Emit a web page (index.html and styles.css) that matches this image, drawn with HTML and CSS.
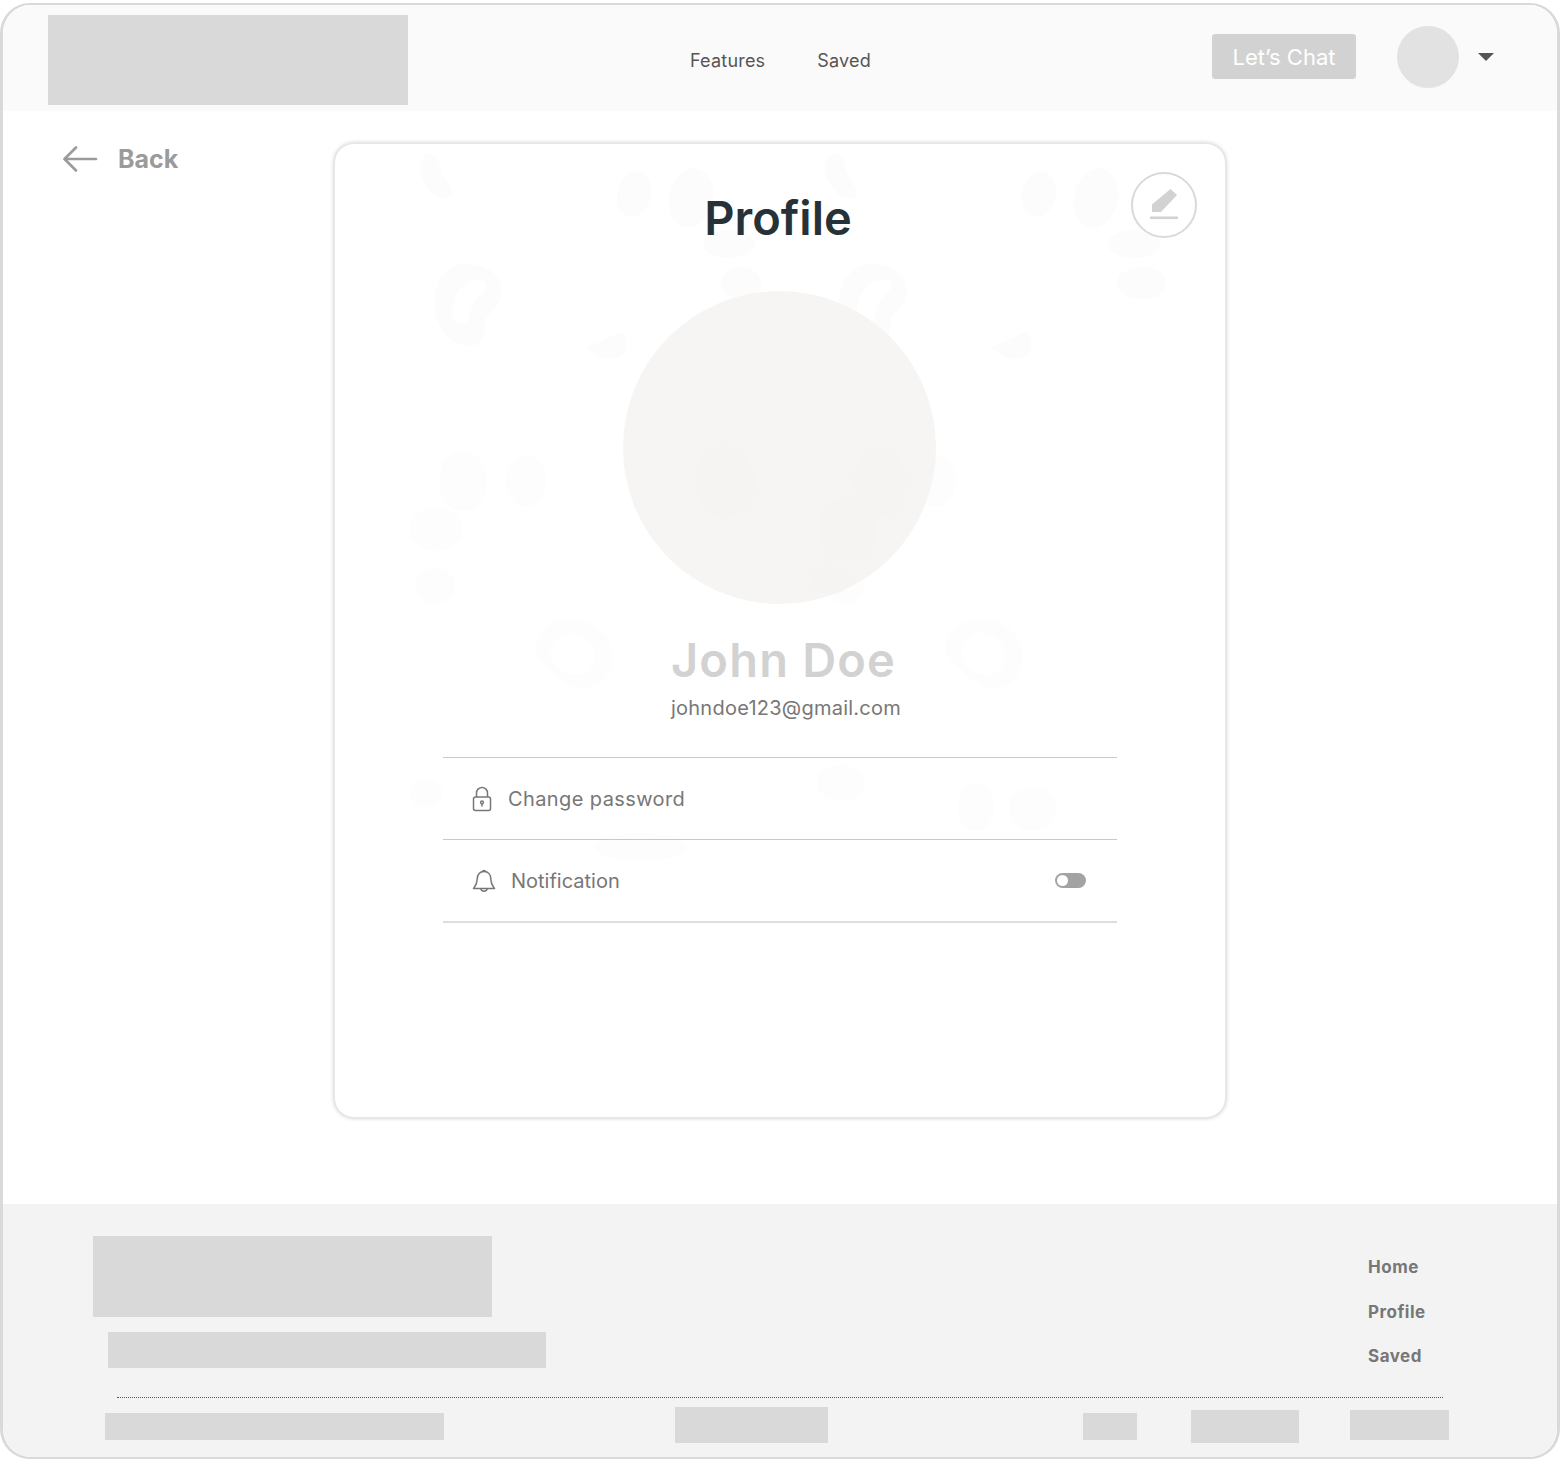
FILE: index.html
```html
<!DOCTYPE html>
<html lang="en">
  <head>
    <meta charset="utf-8" />
    <title>Profile</title>
    <link rel="stylesheet" href="styles.css">
  </head>
  <body>
    <div class="frame">
      <!-- header -->
      <header class="topbar">
        <div class="logo-block"></div>
        <nav class="topnav">
          <a href="#">Features</a>
          <a href="#">Saved</a>
        </nav>
        <button class="chat-btn">Let’s Chat</button>
        <div class="avatar-small"></div>
        <div class="caret"></div>
      </header>

      <main class="content">
        <a href="#" class="back-link">
          <svg width="36" height="28" viewBox="0 0 36 28" fill="none" stroke="#9b9b9b" stroke-width="2.6" stroke-linecap="round" stroke-linejoin="round">
            <path d="M33 14H2" />
            <path d="M13 2.5 1.5 14 13 25.5" />
          </svg>
          <span>Back</span>
        </a>

        <section class="profile-card">
          <!-- faint background pattern -->
          <svg class="card-pattern" width="890" height="973" viewBox="334 143 890 973" fill="#fcfcfc">
            <defs>
              <g id="motif">
                <path d="M420 160c6-12 18-8 19 6 1 10 12 18 12 26 0 8-16 6-22-2-7-8-13-20-9-30z" />
                <ellipse cx="633" cy="193" rx="17" ry="23" transform="rotate(12 633 193)" />
                <ellipse cx="690" cy="197" rx="22" ry="30" transform="rotate(12 690 197)" />
                <ellipse cx="728" cy="243" rx="26" ry="14" />
                <ellipse cx="740" cy="282" rx="20" ry="16" />
                <path fill-rule="evenodd" d="M465 263c22 0 38 12 35 32-2 12-14 16-16 26-1 14-2 24-16 24-20 0-36-24-35-44 1-22 14-38 32-38zm12 16c-14 0-26 14-26 34 0 8 8 12 14 8 3-2 4-10 6-16 2-8 16-14 14-22-1-3-4-4-8-4z" />
                <path d="M585 345c12-2 22-8 33-14 7 1 10 14 5 22-8 6-26 8-38-8z" />
              </g>
              <g id="motif-low" fill="#fdfdfd">
                <ellipse cx="462" cy="480" rx="24" ry="30" />
                <ellipse cx="525" cy="480" rx="20" ry="26" />
                <ellipse cx="435" cy="528" rx="26" ry="22" />
                <ellipse cx="434" cy="585" rx="20" ry="18" />
                <path fill-rule="evenodd" d="M570 618c24 0 42 18 42 38s-16 32-30 32-34-18-48-36c-2-18 14-34 36-34zm0 14c-10 0-20 8-20 20s14 22 26 22 18-10 18-20-12-22-24-22z" />
              </g>
            </defs>
            <use href="#motif" />
            <use href="#motif" x="405" />
            <use href="#motif-low" />
            <use href="#motif-low" x="410" />
            <ellipse cx="1140" cy="282" rx="24" ry="16" />
            <g fill="#fdfdfd">
              <ellipse cx="840" cy="782" rx="24" ry="18" />
              <ellipse cx="975" cy="806" rx="18" ry="24" />
              <ellipse cx="1032" cy="808" rx="24" ry="22" />
              <ellipse cx="425" cy="792" rx="16" ry="14" />
              <ellipse cx="640" cy="846" rx="46" ry="14" />
            </g>
          </svg>

          <h1 class="card-title">Profile</h1>
          <button class="edit-btn">
            <svg width="30" height="32" viewBox="0 0 30 32" fill="#d2d2d2">
              <path d="M21.5 1 28 7 12 24H3v-7.500z" />
              <rect x="1" y="28.500" width="28" height="2.600" />
            </svg>
          </button>

          <div class="avatar-big">
            <svg width="313" height="313" viewBox="623 291 313 313" fill="#f5f4f3">
              <ellipse cx="725" cy="482" rx="30" ry="36" />
              <ellipse cx="880" cy="482" rx="26" ry="36" />
              <ellipse cx="848" cy="530" rx="30" ry="32" />
              <ellipse cx="830" cy="580" rx="20" ry="14" />
            </svg>
          </div>

          <h2 class="user-name">John Doe</h2>
          <p class="user-mail">johndoe123@gmail.com</p>

          <ul class="settings">
            <li class="settings-row">
              <svg class="row-icon" width="20" height="26" viewBox="0 0 20 26" fill="none" stroke="#777" stroke-width="1.500">
                <rect x="1.500" y="11" width="17" height="13.500" rx="2" />
                <path d="M4.500 11V7a5.500 5.500 0 0 1 11 0v4" />
                <circle cx="10" cy="16.500" r="1.400" />
                <path d="M10 18v2.500" />
              </svg>
              <span class="row-text row-text-wide">Change password</span>
            </li>
            <li class="settings-row">
              <svg class="row-icon row-icon-bell" width="24" height="26" viewBox="0 0 24 26" fill="none" stroke="#777" stroke-width="1.500" stroke-linejoin="round">
                <path d="M12 3.500c-4.500 0-6.800 3.400-6.800 7.500 0 5-1.500 6.500-3.700 9.500h21c-2.200-3-3.700-4.500-3.700-9.500 0-4.100-2.300-7.500-6.800-7.500z" />
                <path d="M10.300 3.700a1.800 1.800 0 0 1 3.400 0" />
                <path d="M8.800 20.800a3.300 3.300 0 0 0 6.400 0" />
              </svg>
              <span class="row-text">Notification</span>
              <span class="toggle"><span class="toggle-knob"></span></span>
            </li>
          </ul>
        </section>
      </main>

      <!-- footer -->
      <footer class="site-footer">
        <div class="footer-top">
          <div class="footer-brand">
            <div class="footer-logo"></div>
            <div class="footer-tagline"></div>
          </div>
          <ul class="footer-links">
            <li><a href="#">Home</a></li>
            <li><a href="#">Profile</a></li>
            <li><a href="#">Saved</a></li>
          </ul>
        </div>
        <div class="footer-rule"></div>
        <div class="footer-bottom">
          <div class="ph ph-copy"></div>
          <div class="ph ph-mid"></div>
          <div class="ph ph-small"></div>
          <div class="ph ph-terms"></div>
          <div class="ph ph-last"></div>
        </div>
      </footer>
    </div>
  </body>
</html>
```

FILE: styles.css
```css
* {
  box-sizing: border-box;
}

body {
  margin: 0;
  background-color: white;
  font-family: Inter, "Liberation Sans", sans-serif;
}

a {
  color: inherit;
  text-decoration: none;
}

ul {
  list-style: none;
  margin: 0;
  padding: 0;
}

.frame {
  display: flex;
  flex-direction: column;
  width: 1560px;
  height: 1456px;
  margin-top: 3px;
  border: 3px solid #d9d9d9;
  border-top-width: 2px;
  border-bottom-width: 2px;
  border-radius: 30px;
  overflow: hidden;
  background-color: white;
}

/* header */
.topbar {
  display: flex;
  align-items: flex-start;
  flex: none;
  height: 106px;
  padding: 10px 0 0 45px;
  background-color: #fafafa;
}

.logo-block {
  width: 360px;
  height: 90px;
  background-color: #d9d9d9;
}

.topnav {
  display: flex;
  gap: 52px;
  margin: 36px 0 0 282px;
  font-size: 18px;
  letter-spacing: 0.2px;
  line-height: 20px;
  color: #555;
}

.chat-btn {
  width: 144px;
  height: 45px;
  margin: 19px 0 0 341px;
  border: 0;
  border-radius: 3px;
  background-color: #d2d2d2;
  color: white;
  font-family: Inter, sans-serif;
  font-size: 22px;
}

.avatar-small {
  width: 62px;
  height: 62px;
  margin: 11px 0 0 41px;
  border-radius: 50%;
  background-color: #e2e2e2;
}

.caret {
  width: 0;
  height: 0;
  margin: 38px 0 0 19px;
  border-left: 8px solid transparent;
  border-right: 8px solid transparent;
  border-top: 8px solid #555;
}

/* main */
.content {
  display: flex;
  align-items: flex-start;
  flex: 1;
  padding: 32px 0 0 60px;
}

.back-link {
  display: flex;
  align-items: center;
  gap: 19px;
  width: 271px;
  height: 32px;
  color: #9b9b9b;
  font-size: 25px;
  font-weight: 700;
}

.profile-card {
  position: relative;
  width: 892px;
  height: 975px;
  padding: 44px 108px 0;
  border: 1px solid #e6e6e6;
  border-radius: 20px;
  background-color: white;
  box-shadow: 0 0 4px rgba(0, 0, 0, 0.22);
  text-align: center;
}

.card-pattern {
  position: absolute;
  top: 0;
  left: 0;
}

.card-title,
.avatar-big,
.user-name,
.user-mail,
.settings {
  position: relative;
}

.card-title {
  height: 60px;
  margin: 0;
  padding-right: 4px;
  color: #263238;
  font-size: 47px;
  font-weight: 600;
  line-height: 60px;
}

.edit-btn {
  position: absolute;
  top: 28px;
  right: 28px;
  display: flex;
  align-items: center;
  justify-content: center;
  width: 66px;
  height: 66px;
  padding: 0 0 2px;
  border: 2px solid #d9d9d9;
  border-radius: 50%;
  background-color: white;
}

.avatar-big {
  width: 313px;
  height: 313px;
  margin: 43px 0 0 180px;
  border-radius: 50%;
  background-color: #f6f5f4;
}

.user-name {
  height: 60px;
  margin: 26px 0 0;
  padding-left: 7px;
  color: #d2d2d2;
  font-size: 47px;
  font-weight: 600;
  letter-spacing: 1.2px;
  line-height: 60px;
}

.user-mail {
  height: 30px;
  margin: 3px 0 0;
  padding-left: 12px;
  color: #777;
  font-size: 20px;
  letter-spacing: 0.25px;
  line-height: 30px;
}

.settings {
  margin-top: 34px;
  border-top: 1px solid #c9c9c9;
}

.settings-row {
  display: flex;
  align-items: center;
  height: 82px;
  padding: 0 31px 0 29px;
  border-bottom: 1px solid #c9c9c9;
  color: #777;
  font-size: 20px;
}

.settings-row:last-child {
  height: 83px;
  border-bottom: 2px solid #dedede;
}

.row-icon {
  margin-right: 16px;
}

.row-icon-bell {
  margin-right: 15px;
}

.row-text {
  flex: 1;
  text-align: left;
}

.row-text-wide {
  letter-spacing: 0.4px;
}

.toggle {
  display: flex;
  align-items: center;
  width: 31px;
  height: 15px;
  padding-left: 2px;
  border-radius: 8px;
  background-color: #a3a3a3;
}

.toggle-knob {
  width: 11px;
  height: 11px;
  border-radius: 50%;
  background-color: white;
}

/* footer */
.site-footer {
  display: flex;
  flex-direction: column;
  flex: none;
  height: 253px;
  padding-top: 32px;
  background-color: #f3f3f3;
}

.footer-top {
  display: flex;
  justify-content: space-between;
  padding: 0 0 0 90px;
}

.footer-logo {
  width: 399px;
  height: 81px;
  background-color: #d9d9d9;
}

.footer-tagline {
  width: 438px;
  height: 36px;
  margin: 15px 0 0 15px;
  background-color: #d9d9d9;
}

.footer-links {
  display: flex;
  flex-direction: column;
  gap: 24px;
  width: 189px;
  padding-top: 21px;
  color: #777;
  font-size: 17px;
  font-weight: 700;
  letter-spacing: 0.5px;
  line-height: 20.500px;
}

.footer-rule {
  width: 1326px;
  margin: 29px 0 0 114px;
  border-top: 1px dotted #555;
}

.footer-bottom {
  display: flex;
  align-items: flex-start;
  padding: 9px 0 0 102px;
}

.ph {
  background-color: #d9d9d9;
}

.ph-copy {
  width: 339px;
  height: 27px;
  margin-top: 6px;
}

.ph-mid {
  width: 153px;
  height: 36px;
  margin-left: 231px;
}

.ph-small {
  width: 54px;
  height: 27px;
  margin: 6px 0 0 255px;
}

.ph-terms {
  width: 108px;
  height: 33px;
  margin: 3px 0 0 54px;
}

.ph-last {
  width: 99px;
  height: 30px;
  margin: 3px 0 0 51px;
}
```
